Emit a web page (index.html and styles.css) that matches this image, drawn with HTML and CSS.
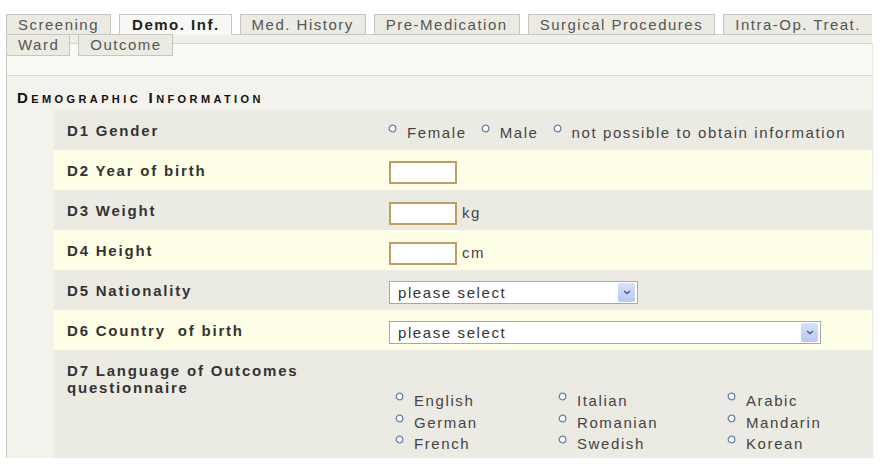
FILE: index.html
```html
<!DOCTYPE html>
<html>
<head>
<meta charset="utf-8">
<link rel="stylesheet" href="styles.css">
</head>
<body>
<div class="tabs">
  <ul class="tabrow first">
    <li class="tab">Screening</li>
    <li class="tab active">Demo. Inf.</li>
    <li class="tab">Med. History</li>
    <li class="tab">Pre-Medication</li>
    <li class="tab">Surgical Procedures</li>
    <li class="tab">Intra-Op. Treat.</li>
  </ul>
  <ul class="tabrow second">
    <li class="tab">Ward</li>
    <li class="tab">Outcome</li>
  </ul>
</div>
<div class="panel">
  <div class="panel-head"></div>
  <div class="panel-body">
    <h2 class="section-title">Demographic Information</h2>
    <div class="form">
      <div class="row grey">
        <div class="label">D1 Gender</div>
        <div class="value">
          <span class="opt"><svg class="dot" width="9" height="9" viewBox="0 0 9 9"><circle cx="4.5" cy="4.5" r="3.3" fill="#fff" stroke="#6584b0" stroke-width="1.3"/></svg>Female</span>
          <span class="opt"><svg class="dot" width="9" height="9" viewBox="0 0 9 9"><circle cx="4.5" cy="4.5" r="3.3" fill="#fff" stroke="#6584b0" stroke-width="1.3"/></svg>Male</span>
          <span class="opt"><svg class="dot" width="9" height="9" viewBox="0 0 9 9"><circle cx="4.5" cy="4.5" r="3.3" fill="#fff" stroke="#6584b0" stroke-width="1.3"/></svg>not possible to obtain information</span>
        </div>
      </div>
      <div class="row cream">
        <div class="label">D2 Year of birth</div>
        <div class="value"><span class="text-input"></span></div>
      </div>
      <div class="row grey">
        <div class="label">D3 Weight</div>
        <div class="value"><span class="text-input"></span><span class="unit">kg</span></div>
      </div>
      <div class="row cream">
        <div class="label">D4 Height</div>
        <div class="value"><span class="text-input"></span><span class="unit">cm</span></div>
      </div>
      <div class="row grey">
        <div class="label">D5 Nationality</div>
        <div class="value">
          <div class="select short"><span>please select</span><span class="arrow"><svg width="8" height="5" viewBox="0 0 8 5"><path d="M1 1l3 2.5L7 1" stroke="#4a5d84" stroke-width="1.5" fill="none"/></svg></span></div>
        </div>
      </div>
      <div class="row cream">
        <div class="label">D6 Country&nbsp; of birth</div>
        <div class="value">
          <div class="select long"><span>please select</span><span class="arrow"><svg width="8" height="5" viewBox="0 0 8 5"><path d="M1 1l3 2.5L7 1" stroke="#4a5d84" stroke-width="1.5" fill="none"/></svg></span></div>
        </div>
      </div>
      <div class="row grey">
        <div class="label">D7 Language of Outcomes<br>questionnaire</div>
        <div class="value">
          <div class="langs">
            <span class="opt"><svg class="dot" width="9" height="9" viewBox="0 0 9 9"><circle cx="4.5" cy="4.5" r="3.3" fill="#fff" stroke="#6584b0" stroke-width="1.3"/></svg>English</span>
            <span class="opt"><svg class="dot" width="9" height="9" viewBox="0 0 9 9"><circle cx="4.5" cy="4.5" r="3.3" fill="#fff" stroke="#6584b0" stroke-width="1.3"/></svg>Italian</span>
            <span class="opt"><svg class="dot" width="9" height="9" viewBox="0 0 9 9"><circle cx="4.5" cy="4.5" r="3.3" fill="#fff" stroke="#6584b0" stroke-width="1.3"/></svg>Arabic</span>
            <span class="opt"><svg class="dot" width="9" height="9" viewBox="0 0 9 9"><circle cx="4.5" cy="4.5" r="3.3" fill="#fff" stroke="#6584b0" stroke-width="1.3"/></svg>German</span>
            <span class="opt"><svg class="dot" width="9" height="9" viewBox="0 0 9 9"><circle cx="4.5" cy="4.5" r="3.3" fill="#fff" stroke="#6584b0" stroke-width="1.3"/></svg>Romanian</span>
            <span class="opt"><svg class="dot" width="9" height="9" viewBox="0 0 9 9"><circle cx="4.5" cy="4.5" r="3.3" fill="#fff" stroke="#6584b0" stroke-width="1.3"/></svg>Mandarin</span>
            <span class="opt"><svg class="dot" width="9" height="9" viewBox="0 0 9 9"><circle cx="4.5" cy="4.5" r="3.3" fill="#fff" stroke="#6584b0" stroke-width="1.3"/></svg>French</span>
            <span class="opt"><svg class="dot" width="9" height="9" viewBox="0 0 9 9"><circle cx="4.5" cy="4.5" r="3.3" fill="#fff" stroke="#6584b0" stroke-width="1.3"/></svg>Swedish</span>
            <span class="opt"><svg class="dot" width="9" height="9" viewBox="0 0 9 9"><circle cx="4.5" cy="4.5" r="3.3" fill="#fff" stroke="#6584b0" stroke-width="1.3"/></svg>Korean</span>
          </div>
        </div>
      </div>
    </div>
  </div>
</div>
</body>
</html>
```
FILE: styles.css
```css
body {
  margin: 0;
  background: #fff;
  font-family: "Liberation Sans", Arial, sans-serif;
  font-size: 15px;
  letter-spacing: 1.6px;
  color: #444;
}
ul {
  list-style: none;
  margin: 0;
  padding: 0;
}
.tabrow {
  display: flex;
}
.first {
  gap: 8px;
  margin: 14px 0 0 6px;
  width: 866px;
  overflow: hidden;
}
.tab {
  flex: none;
  height: 19px;
  line-height: 19px;
  padding: 0 11px;
  border: 1px solid #c6c6be;
  background: #ebebe3;
  color: #555;
  letter-spacing: 1.5px;
}
.tab.active {
  background: #f8f8f4;
  font-weight: bold;
  color: #222;
  border-bottom-color: #f8f8f4;
  padding: 0 11px 0 12px;
}
.second {
  gap: 8px;
  margin: -1px 0 0 6px;
  width: 866px;
  height: 8px;
  border-top: 1px solid #cfcfc7;
  background: #f0efe9;
}
.second .tab {
  height: 20px;
  line-height: 20px;
  margin-top: -1px;
  padding: 0 10px 0 11px;
}
.panel {
  margin-left: 6px;
  width: 865px;
  border-left: 1px solid #c8c8c0;
  border-top: 1px solid #d6d5cd;
  border-right: 1px solid #e8e7e0;
}
.panel-head {
  height: 31px;
  background: #f9f9f5;
  border-bottom: 1px solid #dcdbd3;
}
.panel-body {
  background: #f3f2ec;
}
.section-title {
  margin: 0;
  height: 34px;
  box-sizing: border-box;
  padding: 14px 0 0 10px;
  font-size: 15px;
  line-height: 16px;
  font-weight: bold;
  font-variant: small-caps;
  letter-spacing: 3.4px;
  color: #111;
}
.form {
  margin-left: 47px;
}
.row {
  display: flex;
  min-height: 40px;
}
.row.grey {
  background: #ebeae3;
}
.row.cream {
  background: #fefee6;
}
.label {
  flex: none;
  width: 322px;
  padding: 12px 0 0 13px;
  line-height: 17px;
  font-weight: bold;
  color: #333;
  letter-spacing: 1.8px;
}
.value {
  flex: 1;
  display: flex;
  align-items: center;
  align-self: flex-start;
  padding-top: 11px;
  line-height: 24px;
}
.opt {
  display: flex;
  align-items: center;
}
.opt + .opt {
  margin-left: 15px;
}
.dot {
  flex: none;
  display: block;
  margin: 0 10px 10px -1px;
}
.text-input {
  width: 68px;
  height: 23px;
  box-sizing: border-box;
  border: 2px solid #bd9f5e;
  background: #fff;
}
.unit {
  margin-left: 5px;
}
.select {
  display: flex;
  align-items: center;
  justify-content: space-between;
  box-sizing: border-box;
  height: 23px;
  border: 1px solid #a8a8ac;
  background: #fff;
  padding: 0 2px 0 8px;
  color: #333;
  line-height: 20px;
}
.select.short {
  width: 249px;
}
.select.long {
  width: 432px;
}
.arrow {
  width: 17px;
  height: 19px;
  border-radius: 2px;
  background: linear-gradient(#d6e2fb, #b6c8f3);
  display: flex;
  align-items: center;
  justify-content: center;
}
.langs {
  display: grid;
  grid-template-columns: 163px 169px 1fr;
  padding: 29px 0 3px 7px;
  line-height: 21.5px;
  width: 100%;
}
.langs .opt + .opt {
  margin-left: 0;
}
.langs .dot {
  margin-bottom: 8px;
}
```
